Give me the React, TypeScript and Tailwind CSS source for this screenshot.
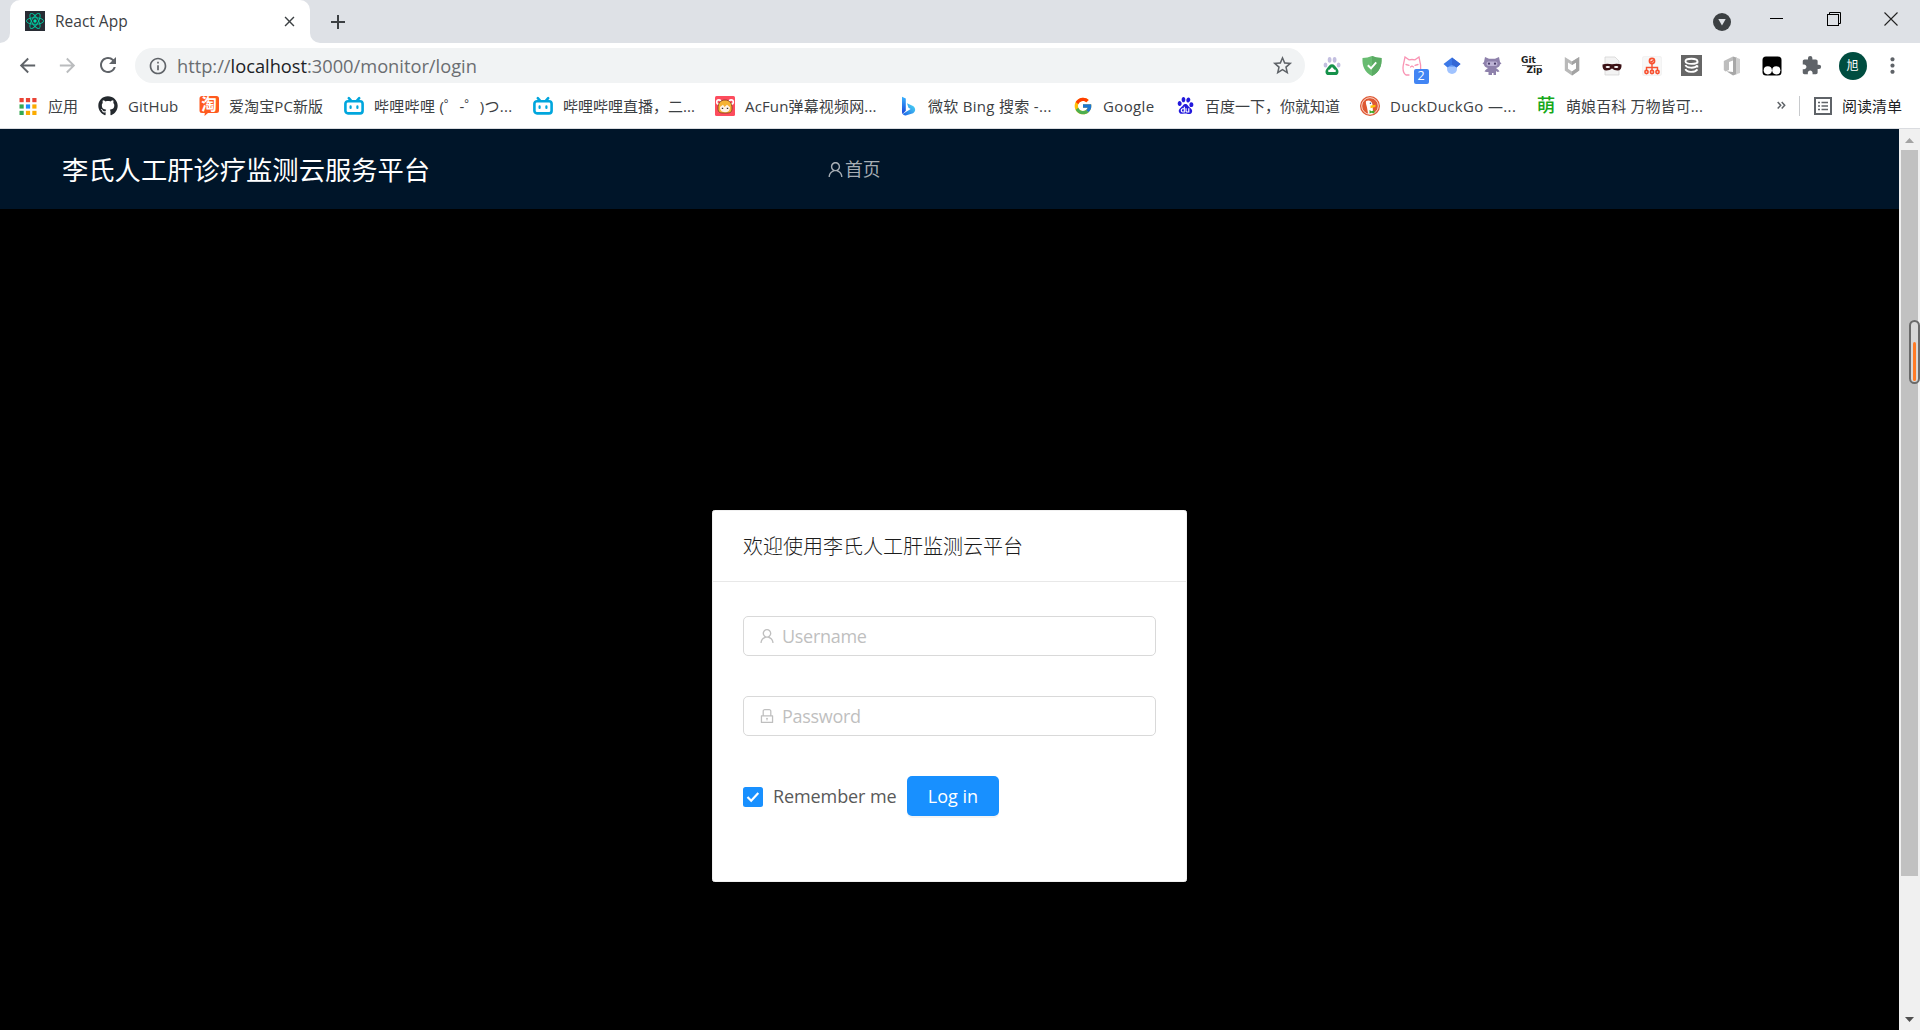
import React from "react";
import { AiOutlineUser, AiOutlineLock } from "react-icons/ai";
import { MdExtension, MdStarBorder, MdRefresh, MdArrowBack, MdArrowForward, MdInfoOutline, MdMoreVert, MdClose, MdAdd } from "react-icons/md";
import { FaGithub } from "react-icons/fa";
import { FcGoogle } from "react-icons/fc";
import { SiBaidu } from "react-icons/si";

function ReactFavicon() {
  return (
    <svg width="20" height="20" viewBox="0 0 20 20" fill="none" stroke="#00c9a0" strokeWidth="0.9">
      <rect width="20" height="20" fill="#282c34" stroke="none" />
      <ellipse cx="10" cy="10" rx="8.6" ry="3.3" />
      <ellipse cx="10" cy="10" rx="8.6" ry="3.3" transform="rotate(60 10 10)" />
      <ellipse cx="10" cy="10" rx="8.6" ry="3.3" transform="rotate(120 10 10)" />
      <circle cx="10" cy="10" r="1.7" fill="#00d8a8" stroke="none" />
    </svg>
  );
}

function AppsIcon() {
  const colors = ["#ea4335", "#ea4335", "#ea4335", "#34a853", "#1a8cff", "#fbab00", "#34a853", "#fbab00", "#fbab00"];
  return (
    <svg width="20" height="20" viewBox="0 0 20 20">
      {colors.map((c, i) => (
        <rect key={i} x={1.5 + (i % 3) * 6.4} y={2 + Math.floor(i / 3) * 6.4} width="4.2" height="4.2" fill={c} />
      ))}
    </svg>
  );
}

function TaobaoIcon() {
  return (
    <div className="relative h-5 w-5">
      <svg width="20" height="20" viewBox="0 0 20 20" className="absolute inset-0">
        <path d="M3 0h14.500Q20 0 20 2.500v12Q20 17 17.500 17H9l-3.500 3 .3-3H3Q.5 17 .5 14.500v-12Q.5 0 3 0z" fill="#ff5a1f" />
      </svg>
      <span className="absolute inset-x-0 top-0 text-center text-[15.500px] leading-[17px] font-bold text-white">淘</span>
    </div>
  );
}

function BilibiliIcon() {
  return (
    <svg width="20" height="20" viewBox="0 0 20 20" fill="none" stroke="#00a6dd" strokeWidth="2.6" strokeLinecap="round">
      <path d="M4.8 2.2 7 4.6M15.2 2.2 13 4.6" />
      <rect x="1.4" y="5.2" width="17.2" height="12.2" rx="2.6" />
      <path d="M6.6 10.4v1.6M13.4 10.4v1.6" strokeWidth="2.2" />
    </svg>
  );
}

function AcFunIcon() {
  return (
    <svg width="20" height="20" viewBox="0 0 20 20">
      <rect width="20" height="20" rx="1.5" fill="#fd4c5d" />
      <circle cx="3.8" cy="6" r="2.9" fill="#fff" />
      <circle cx="16.2" cy="6" r="2.9" fill="#fff" />
      <circle cx="3.8" cy="6" r="1.3" fill="#fd4c5d" />
      <circle cx="16.2" cy="6" r="1.3" fill="#fd4c5d" />
      <path d="M3 12c0-5 2.6-8 7-8s7 3 7 8-2 5-7 5-7 0-7-5z" fill="#f5b335" stroke="#7b3b1e" strokeWidth=".8" />
      <path d="M5 11l3-2.2L9.6 11 12 8.8l3 2.4c0 3-1.6 5-5 5s-5-2-5-5.200z" fill="#fff3e8" />
      <path d="M6.8 12.300h1.400M11.800 12.300h1.400" stroke="#333" strokeWidth="1.300" />
    </svg>
  );
}

function BingIcon() {
  return (
    <svg width="20" height="20" viewBox="0 0 20 20">
      <defs>
        <linearGradient id="bingStem" x1="0" y1="0" x2="0" y2="1">
          <stop offset="0" stopColor="#3bb4ff" />
          <stop offset="1" stopColor="#1743d8" />
        </linearGradient>
        <linearGradient id="bingTail" x1="0" y1="1" x2="1" y2="0">
          <stop offset="0" stopColor="#1b62e6" />
          <stop offset="1" stopColor="#4fe0f5" />
        </linearGradient>
      </defs>
      <path d="M4 .8l3.800 1.600v12.400L4.600 18Q4 17 4 15.500z" fill="url(#bingStem)" />
      <path d="M9 7.200l5.500 2.600q3 1.500 2.600 4.700-.4 1.800-2 2.700L8.500 19.200q-2.400.8-3.900-1.200l8.100-5-2.200-1.200z" fill="url(#bingTail)" />
    </svg>
  );
}

function DuckIcon() {
  return (
    <svg width="20" height="20" viewBox="0 0 20 20">
      <circle cx="10" cy="10" r="10" fill="#de5833" />
      <circle cx="10" cy="10" r="8.300" fill="none" stroke="#fbd9cd" strokeWidth="1" />
      <path d="M6 5.200c2-1.700 6-.8 6.500 3.200l.6 9q-3 1.300-5 .4L7 11.500C6.500 9 5.500 7.500 6 5.200z" fill="#fff" />
      <path d="M10.500 9.500l5.500-.8-1 1.500 1 .6-5.500 1.400z" fill="#fdc20a" />
      <circle cx="10.400" cy="7.200" r=".8" fill="#2d4f8e" />
      <path d="M9.500 14l2 1.200 2.800-1v3.300l-2.600-.8-2.200.8z" fill="#3fae2a" />
    </svg>
  );
}

function MoeIcon() {
  return <span className="w-5 text-center text-[18.500px] leading-none font-medium text-[#17a81a]">萌</span>;
}

const bookmarks: { icon: React.ReactNode; label: string; box: string; text: string }[] = [
  { icon: <AppsIcon />, label: "应用", box: "w-20", text: "" },
  { icon: <FaGithub size={20} color="#24292e" />, label: "GitHub", box: "w-[101px]", text: "tracking-[0.15px]" },
  { icon: <TaobaoIcon />, label: "爱淘宝PC新版", box: "w-[145px]", text: "tracking-[0.1px]" },
  { icon: <BilibiliIcon />, label: "哔哩哔哩 (゜-゜)つ...", box: "w-[189px]", text: "tracking-[0.3px]" },
  { icon: <BilibiliIcon />, label: "哔哩哔哩直播，二...", box: "w-[182px]", text: "" },
  { icon: <AcFunIcon />, label: "AcFun弹幕视频网...", box: "w-[183px]", text: "tracking-[0.15px]" },
  { icon: <BingIcon />, label: "微软 Bing 搜索 -...", box: "w-[175px]", text: "tracking-[0.3px]" },
  { icon: <FcGoogle size={20} />, label: "Google", box: "w-[102px]", text: "tracking-[0.35px]" },
  { icon: <SiBaidu size={17} color="#2319dc" className="mx-[1.5px]" />, label: "百度一下，你就知道", box: "w-[185px]", text: "" },
  { icon: <DuckIcon />, label: "DuckDuckGo —...", box: "w-44", text: "tracking-[0.35px]" },
  { icon: <MoeIcon />, label: "萌娘百科 万物皆可...", box: "w-[241px]", text: "tracking-[0.1px]" },
];

function PawExt() {
  return (
    <svg width="20" height="20" viewBox="0 0 20 20">
      <g fill="#c3bfe0">
        <ellipse cx="3.500" cy="9" rx="1.900" ry="2.500" />
        <ellipse cx="7.600" cy="3.800" rx="1.900" ry="2.900" />
        <ellipse cx="12.600" cy="3.800" rx="1.900" ry="2.900" />
        <ellipse cx="16.600" cy="9" rx="1.900" ry="2.500" />
      </g>
      <path d="M10 8.200c2.300 0 3.300 2 5 4 2.700 3 1.500 6.800-1.500 6.800h-7c-3 0-4.200-3.800-1.500-6.800 1.700-2 2.700-4 5-4z" fill="#16924b" />
      <path d="M6.300 13.700h7.400v2.300H6.300zM10 11l2.500 2.700h-5z" fill="#fff" />
    </svg>
  );
}

function ShieldExt() {
  return (
    <svg width="20" height="20" viewBox="0 0 20 20">
      <path d="M10 0c3 1.300 6 2 9.500 2 .5 8-2 14-9.500 18C2.500 16 0 10 .5 2 4 2 7 1.300 10 0z" fill="#68bc71" />
      <path d="M10 0c3 1.300 6 2 9.500 2 .5 8-2 14-9.500 18z" fill="#5aab63" />
      <path d="M5.800 9.300l3.200 3 5.200-6" fill="none" stroke="#fff" strokeWidth="1.900" />
    </svg>
  );
}

function CatExt() {
  return (
    <div className="relative h-5 w-5">
      <svg width="20" height="20" viewBox="0 0 20 20" fill="none" stroke="#f994b4" strokeWidth="1.300" strokeLinecap="round">
        <path d="M7 19H4C1 17 .8 12 1.300 9L3 1l4 2.800q3-.6 6 0L17 1l1.600 8v4" />
        <path d="M4 8.500l3 .8M16 8.500l-3 .8M8.500 11l1.500-1 1.500 1" />
      </svg>
      <span className="absolute top-[13px] left-3 flex h-[15px] w-[15px] items-center justify-center rounded-[2px] bg-[#4285f4] text-[12.500px] leading-none text-white">2</span>
    </div>
  );
}

function ScholarExt() {
  return (
    <svg width="18" height="18" viewBox="0 0 18 18">
      <circle cx="9" cy="12" r="5" fill="#a0c3ff" />
      <path d="M4.500 10A5 5 0 0 1 13.500 10z" fill="#76a7fa" />
      <path d="M9 .5L.5 7l4 3.500Q9 6 13.500 10.500l4-3.500z" fill="#3b78e7" />
      <path d="M9 .5L17.500 7l-4 3.500Q11.500 8 9 8z" fill="#3367d6" />
    </svg>
  );
}

function OctocatExt() {
  return (
    <svg width="20" height="20" viewBox="0 0 20 20" fill="#8e81ab">
      <path d="M3 1l4 1.800h6L17 1l1 5 1.500 1.500-1.500 1q-.3 2.500-4 3.500l2.500 2 1 1.500-2 .5-1.500-1V19h-2.500v-2h-1.500v2H6.500v-3L4.500 16l-2-.5 1-1.500 2.500-2Q2.300 11 2 8.500l-1.500-1L2 6z" />
      <rect x="4.500" y="5.500" width="11" height="4.500" rx="2" fill="#bcb2d4" />
      <circle cx="7" cy="7.700" r="1.100" fill="#473a66" />
      <circle cx="13" cy="7.700" r="1.100" fill="#473a66" />
    </svg>
  );
}

function GitZipExt() {
  return (
    <div className="flex h-5 w-5 flex-col items-center font-['DejaVu_Sans'] text-[9px] leading-[9.500px] font-bold text-[#222]">
      <span className="-ml-1.5">Git</span>
      <span className="h-px w-5 shrink-0 bg-[#666]" />
      <span className="ml-1.5">Zip</span>
    </div>
  );
}

function McAfeeExt() {
  return (
    <svg width="16" height="20" viewBox="0 0 16 20">
      <path d="M.8 1v13.500L8 19.500l7.200-5V1L8 5.500z" fill="#b9b9b9" />
      <path d="M4 6.500v6.300l4 2.700 4-2.700V6.500L8 9z" fill="#fff" />
      <path d="M8 5.500L15.200 1v13.500L8 19.500v-4l4-2.700V6.500L8 9z" fill="#a3a3a3" />
    </svg>
  );
}

function MaskExt() {
  return (
    <svg width="20" height="20" viewBox="0 0 20 20">
      <path d="M3 1h10l4 4v14H3z" fill="#f3f3f3" stroke="#d0d0d0" strokeWidth=".7" />
      <path d="M.5 8.500Q5 7 10 8.300q5-1.300 9.500.2.500 6-4 6-3.500 0-5.500-2Q8 14.500 4.500 14.500 0 14.500.5 8.500z" fill="#3c1216" />
      <ellipse cx="5.800" cy="11" rx="2.200" ry="1" fill="#fff" />
      <ellipse cx="14.200" cy="11" rx="2.200" ry="1" fill="#fff" />
    </svg>
  );
}

function TreeExt() {
  return (
    <svg width="20" height="20" viewBox="0 0 20 20" fill="none" stroke="#f8502f" strokeWidth="1.600">
      <rect x=".3" y=".3" width="19.400" height="19.400" rx="2.500" fill="#f7f7f7" stroke="#ededed" strokeWidth=".6" />
      <circle cx="10" cy="5" r="2.600" />
      <path d="M10 7.500V15M4.500 14.500v-3h11v3M8.500 5l1.200 1 2-2" strokeWidth="1.400" />
      <circle cx="4.500" cy="16" r="1.600" />
      <circle cx="10" cy="16" r="1.600" />
      <circle cx="15.500" cy="16" r="1.600" />
    </svg>
  );
}

function StackExt() {
  return (
    <svg width="21" height="21" viewBox="0 0 21 21" fill="none">
      <rect width="21" height="21" fill="#666" />
      <path d="M16.500 6.500c0 1.500-2.700 2.400-6 2.400S4.500 8 4.500 6.200 7 3.700 10.500 3.700s6 1 6 2.800zM4.500 10c1 3 9 4 12 .3M4.500 14c1 3.500 9 4 12 .3" stroke="#fff" strokeWidth="1.900" />
      <path d="M16.500 6.500v2M16.500 10.500v2" stroke="#fff" strokeWidth="1.500" />
    </svg>
  );
}

function OfficeExt() {
  return (
    <svg width="18" height="20" viewBox="0 0 18 20">
      <path d="M.8 5L10 .5v4L6 6v8l-3.500 1.500L.8 14z" fill="#bdbdbd" />
      <path d="M10 .5l4 1.300V18l-4 1.500-6.500-4.300 6.500.8z" fill="#a8a8a8" />
      <path d="M13 1.500l4 1.500v14l-4 1.300z" fill="#cfcfcf" />
    </svg>
  );
}

function MonkeyExt() {
  return (
    <svg width="20" height="20" viewBox="0 0 20 20">
      <rect x=".5" y=".5" width="19" height="19" rx="3.500" fill="#000" />
      <circle cx="5.800" cy="14.300" r="4.100" fill="#fff" />
      <circle cx="14.300" cy="14.300" r="4.100" fill="#fff" />
    </svg>
  );
}

const extensions = [
  <PawExt />, <ShieldExt />, <CatExt />, <ScholarExt />, <OctocatExt />, <GitZipExt />, <McAfeeExt />,
  <MaskExt />, <TreeExt />, <StackExt />, <OfficeExt />, <MonkeyExt />,
  <MdExtension size={21} color="#5f6368" />,
];

function TabStrip() {
  return (
    <div className="flex h-[43px] bg-[#dee1e6]">
      <div className="flex w-[10px] items-end bg-white">
        <div className="h-full w-full rounded-br-[10px] bg-[#dee1e6]" />
      </div>
      <div className="w-[300px] bg-[#dee1e6]">
        <div className="flex h-[43px] items-center rounded-t-[10px] bg-white pr-3 pb-px pl-[15px]">
          <ReactFavicon />
          <span className="ml-2.5 flex-1 pt-[2px] text-[15.500px] text-[#3c4043]">React App</span>
          <MdClose size={17} color="#3c4043" />
        </div>
      </div>
      <div className="flex flex-1 bg-white">
        <div className="flex flex-1 rounded-bl-[10px] bg-[#dee1e6]">
          <div className="flex h-[43px] w-14 items-center pl-4">
            <MdAdd size={24} color="#3c4043" />
          </div>
          <div className="flex-1" />
          <div className="mt-[13px] mr-[34px] h-[18px] w-[18px]">
            <svg width="18" height="18" viewBox="0 0 18 18">
              <circle cx="9" cy="9" r="9" fill="#3c4043" />
              <path d="M5.300 6h7.400L9 12.500z" fill="#dee1e6" />
            </svg>
          </div>
          <div className="mt-[9px] flex gap-[43px] pr-[22px]">
            <svg width="19" height="19" viewBox="0 0 19 19">
              <path d="M5 9.500h13" stroke="#000" />
            </svg>
            <svg width="14" height="14" viewBox="0 0 14 14" fill="none" stroke="#000" className="mt-[3px]">
              <rect x=".5" y="2.500" width="11" height="11" />
              <path d="M2.500 2.500v-2h11v11h-2" />
            </svg>
            <svg width="14" height="14" viewBox="0 0 14 14" stroke="#222" strokeWidth="1.100" className="mt-[3px]">
              <path d="M.5.5l13 13M13.500.5l-13 13" />
            </svg>
          </div>
        </div>
      </div>
    </div>
  );
}

function Toolbar() {
  return (
    <div className="flex h-[45px] items-center bg-white">
      <div className="flex w-[135px] gap-[18px] pl-4">
        <MdArrowBack size={23} color="#5f6368" />
        <MdArrowForward size={23} color="#babcbe" className="-ml-px" />
        <MdRefresh size={24} color="#5f6368" className="-mt-px -ml-px" />
      </div>
      <div className="flex h-[35px] w-[1170px] items-center rounded-full bg-[#f1f3f4] pr-[11px] pl-[13px]">
        <MdInfoOutline size={20} color="#5f6368" />
        <span className="ml-[9px] flex-1 text-[18.250px] text-[#6a6d71]">
          http://<span className="text-[#202124]">localhost</span>:3000/monitor/login
        </span>
        <MdStarBorder size={23} color="#5f6368" />
      </div>
      <div className="ml-[7px] flex">
        {extensions.map((icon, i) => (
          <div key={i} className="flex w-10 items-center justify-center pr-px">{icon}</div>
        ))}
        <div className="flex w-10 items-center justify-center pl-px">
          <div className="flex h-7 w-7 items-center justify-center rounded-full bg-[#004d40] text-[12px] text-white">旭</div>
        </div>
        <div className="flex w-10 items-center justify-center">
          <MdMoreVert size={25} color="#5f6368" />
        </div>
      </div>
    </div>
  );
}

function BookmarksBar() {
  return (
    <div className="flex h-[41px] items-center border-b border-[#dadce0] bg-white pb-[5px] pl-[18px] text-[15px] text-[#3c4043]">
      {bookmarks.map((b) => (
        <div key={b.label} className={`flex shrink-0 items-center gap-2.5 whitespace-nowrap ${b.box}`}>
          {b.icon}
          <span className={`pt-[2px] ${b.text}`}>{b.label}</span>
        </div>
      ))}
      <svg width="9" height="9" viewBox="0 0 9 9" fill="none" stroke="#5f6368" strokeWidth="1.500">
        <path d="M.7 1l3 3.300-3 3.300M4.700 1l3 3.300-3 3.300" />
      </svg>
      <div className="ml-[13px] h-5 w-px bg-[#c8cacd]" />
      <svg width="18" height="18" viewBox="0 0 18 18" fill="none" stroke="#5f6368" className="ml-[14px]">
        <rect x="1" y="1" width="16" height="16" strokeWidth="2" />
        <path d="M4 5.500h2M4 9h2M4 12.500h2M7.500 5.500H14M7.500 9H14M7.500 12.500H14" strokeWidth="1.500" />
      </svg>
      <span className="ml-2.5 shrink-0 pt-[2px] whitespace-nowrap text-[#202124]">阅读清单</span>
    </div>
  );
}

function Scrollbar() {
  return (
    <div className="relative flex w-[21px] flex-col items-center bg-[#f0f0f0]">
      <div className="flex h-[21px] items-center justify-center">
        <svg width="9" height="5" viewBox="0 0 9 5" className="mt-0.5"><path d="M4.500 0L9 5H0z" fill="#a3a3a3" /></svg>
      </div>
      <div className="h-[726px] w-[17px] bg-[#c1c1c1]" />
      <div className="flex-1" />
      <div className="flex h-[21px] items-center justify-center">
        <svg width="9" height="5" viewBox="0 0 9 5"><path d="M0 0h9L4.500 5z" fill="#505050" /></svg>
      </div>
      <div className="absolute top-[191px] left-[10px] flex h-16 w-[11px] flex-col justify-end rounded-full border-2 border-[#6a6a6a] bg-[#d8d8d8] px-[2px] pb-px">
        <div className="h-[39px] rounded-full bg-[#ff7b26]" />
      </div>
    </div>
  );
}

function LoginCard() {
  return (
    <div className="mt-[301px] ml-[712px] h-[372px] w-[475px] rounded-[2.500px] border border-[#f0f0f0] bg-white">
      <div className="flex h-[71px] items-center border-b border-[#e8e8e8] px-[30px] pt-[2px] font-['Open_Sans','Noto_Sans_CJK_SC',sans-serif] text-[20px] font-light text-[#1c1c1c]">
        欢迎使用李氏人工肝监测云平台
      </div>
      <div className="flex flex-col px-[30px] pt-[34px] text-[18px]">
        <div className="flex h-10 w-[413px] items-center rounded-[5px] border border-[#d9d9d9] pl-[14px] text-[#bfbfbf]">
          <AiOutlineUser size={18} />
          <span className="ml-[6px] tracking-[-0.3px]">Username</span>
        </div>
        <div className="mt-10 flex h-10 w-[413px] items-center rounded-[5px] border border-[#d9d9d9] pl-[14px] text-[#bfbfbf]">
          <AiOutlineLock size={18} />
          <span className="ml-[6px] tracking-[-0.3px]">Password</span>
        </div>
        <div className="mt-10 flex h-10 items-center">
          <div className="mt-px flex h-5 w-5 items-center justify-center rounded-[2.500px] bg-[#1890ff]">
            <svg width="14" height="12" viewBox="0 0 14 12" fill="none" stroke="#fff" strokeWidth="2.200"><path d="M1.500 6l3.700 3.700L12.300 2" /></svg>
          </div>
          <span className="ml-[10px] w-[134px] tracking-[-0.1px] text-[#595959]">Remember me</span>
          <div className="flex h-10 w-[92px] items-center justify-center rounded-[5px] bg-[#1890ff] text-white shadow-[0_2px_0_rgba(0,0,0,0.045)]">Log in</div>
        </div>
      </div>
    </div>
  );
}

export default function App() {
  return (
    <div className="flex h-[1030px] w-[1920px] flex-col overflow-hidden bg-black font-['Open_Sans','Noto_Sans_CJK_SC',sans-serif]">
      <TabStrip />
      <Toolbar />
      <BookmarksBar />
      <div className="flex flex-1">
        <div className="flex w-[1899px] flex-col bg-black">
          <div className="flex h-20 items-center bg-[#001529] pl-[62px]">
            <h1 className="w-[764px] pt-[3px] text-[26.300px] text-white">李氏人工肝诊疗监测云服务平台</h1>
            <div className="flex items-center pt-px text-[17.750px] text-[#a6adb4]">
              <AiOutlineUser size={19} />
              <span>首页</span>
            </div>
          </div>
          <LoginCard />
        </div>
        <Scrollbar />
      </div>
    </div>
  );
}
